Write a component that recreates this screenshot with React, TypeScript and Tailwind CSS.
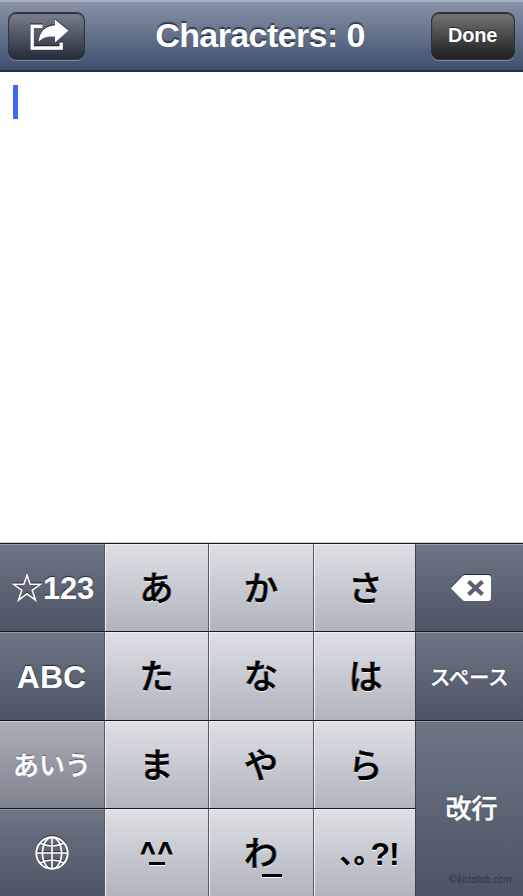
import type { ReactNode } from 'react';

const light =
  "bg-linear-to-b from-[#dfe0e6] to-[#b1b4be] text-black border-[#56575f] shadow-[inset_1px_1px_0_#f0f0f5] [text-shadow:0_1px_1px_#fff]";
const dark =
  "bg-linear-to-b from-[#6e7686] to-[#4d5464] text-white border-[#3b4150] shadow-[inset_0_1px_0_#969eae] [text-shadow:0_-1px_1px_#222936]";

function Key({ tone, className = '', children }: { tone: string; className?: string; children: ReactNode }) {
  return (
    <button className={`flex items-center justify-center border-l border-t border-t-[#14151d] whitespace-nowrap leading-none ${tone} ${className}`}>
      {children}
    </button>
  );
}

function Kana({ children }: { children: string }) {
  return <span className="pt-[2px] text-[34px] font-medium [-webkit-text-stroke:0.9px_black] [paint-order:stroke_fill]">{children}</span>;
}

function ShareIcon() {
  return (
    <svg width="40" height="32" viewBox="0 0 40 32" className="drop-shadow-[0_-1px_0_#181d27]" fill="none">
      <path d="M13.5 7.3H3.2V29H32.2V23.5" stroke="white" strokeWidth="3.4" />
      <path d="M26 .5 39.5 11.6 26 23.4V17.5C18 17 13.5 18.5 9.8 22.8C10 13 16 6.8 26 6.2Z" fill="white" />
    </svg>
  );
}

function DeleteIcon() {
  return (
    <svg width="42" height="28" viewBox="0 0 42 28" className="drop-shadow-[0_-1px_0_#202431]">
      <path d="M.8 14.2 12.5 2Q13.5 1 15 1H38Q41 1 41 4V24Q41 27 38 27H15Q13.5 27 12.5 26Z" fill="white" />
      <path d="m18.5 7.5 14 13M32.5 7.5l-14 13" stroke="#5a6171" strokeWidth="4.2" />
    </svg>
  );
}

function GlobeIcon() {
  return (
    <svg width="36" height="36" viewBox="0 0 36 36" fill="none" stroke="white" strokeWidth="1.7" className="drop-shadow-[0_-1px_0_#252b38]">
      <circle cx="18" cy="18" r="15.7" strokeWidth="2" />
      <ellipse cx="18" cy="18" rx="9.6" ry="15.7" />
      <path d="M18 2V34M2 18H34M6 8Q18 14 30 8M6 28Q18 22 30 28" />
    </svg>
  );
}

function StarIcon() {
  return (
    <svg width="30" height="29" viewBox="0 0 30 29" fill="none" stroke="white" strokeWidth="1.6" className="drop-shadow-[0_-1px_0_#252b38]">
      <path d="M15 2 18.2 11.3H28.3L20.2 17 23.5 27 15 20.8 6.5 27 9.8 17 1.7 11.3H11.8Z" />
    </svg>
  );
}

export default function App() {
  return (
    <div className="flex h-[896px] w-[523px] flex-col overflow-hidden bg-white font-['Liberation_Sans','Noto_Sans_CJK_JP',sans-serif]">
      <header className="flex h-[72px] shrink-0 items-center justify-between border-b-2 border-t-2 border-b-[#252e49] border-t-[#a6b5c5] bg-linear-to-b from-[#8a93a5] to-[#3e4f6e] pl-2 pr-2">
        <button className="flex h-[48px] w-[77px] items-center justify-center rounded-[8px] border border-[#313744] bg-linear-to-b from-[#7b828e] to-[#252d3b] pb-[3px] pl-[5px] shadow-[0_1px_0_#7d899d,inset_0_1px_1px_#282c36]">
          <ShareIcon />
        </button>
        <h1 className="pb-[2px] pl-1 text-[34px] font-bold leading-none tracking-[-0.6px] text-white [text-shadow:0_-2px_1px_#303a4c]">Characters: 0</h1>
        <button className="flex h-[48px] w-[84px] items-center justify-center rounded-[8px] border border-[#30323a] bg-linear-to-b from-[#777779] to-[#1f1f22] pb-[2px] pr-px text-[20px] font-bold tracking-[-0.2px] text-white shadow-[0_1px_0_#7d899d,inset_0_1px_1px_#292a2e] [text-shadow:0_-1px_1px_#222]">
          Done
        </button>
      </header>

      <main className="flex-1 pl-[13px] pt-[13px]">
        <div className="h-[34px] w-[5px] bg-[#4169f4]" />
      </main>

      <section className="grid h-[354px] shrink-0 grid-cols-[104px_104px_105px_102px_108px] grid-rows-[88px_89px_88px_88px] border-t border-[#cdced3]">
        <Key tone={dark} className="border-l-0 pl-[2px] text-[31px] font-bold">
          <StarIcon /><span className="ml-px pt-[2px] tracking-[-0.2px]">123</span>
        </Key>
        <Key tone={light}><Kana>あ</Kana></Key>
        <Key tone={light}><Kana>か</Kana></Key>
        <Key tone={light} className="pl-[2px]"><Kana>さ</Kana></Key>
        <Key tone={dark} className="pl-[3px]"><DeleteIcon /></Key>

        <Key tone={dark} className="border-l-0 pr-px pt-[2px] text-[32px] font-bold">ABC</Key>
        <Key tone={light}><Kana>た</Kana></Key>
        <Key tone={light}><Kana>な</Kana></Key>
        <Key tone={light} className="pl-[2px]"><Kana>は</Kana></Key>
        <Key tone={dark} className="pt-[3px] text-[20px] font-medium tracking-[0.2px] [-webkit-text-stroke:0.5px_white]">スペース</Key>

        <Key tone="bg-linear-to-b from-[#abaeb7] to-[#80848f] text-white border-[#56575f] shadow-[inset_0_1px_0_#c8cbd2] [text-shadow:0_-1px_1px_#414550]" className="border-l-0 pt-[3px] text-[26px] font-medium [-webkit-text-stroke:0.5px_white]">あいう</Key>
        <Key tone={light}><Kana>ま</Kana></Key>
        <Key tone={light}><Kana>や</Kana></Key>
        <Key tone={light} className="pl-[2px]"><Kana>ら</Kana></Key>
        <Key tone={dark} className="relative row-span-2 pl-1 text-[26px] font-medium [-webkit-text-stroke:0.5px_white]">
          <span>改行</span>
          <small className="absolute bottom-[12px] right-[11px] font-['Open_Sans'] text-[10px] font-normal italic text-[#2e3442] [-webkit-text-stroke:0px] [text-shadow:none]">©kotalab.com</small>
        </Key>

        <Key tone={dark} className="border-l-0"><GlobeIcon /></Key>
        <Key tone={light} className="flex-col">
          <span className="h-[22px] pl-[3px] text-[25px] font-bold tracking-[3px] [-webkit-text-stroke:0.9px_black]">^^</span>
          <span className="h-[3px] w-4 bg-black shadow-[0_1px_0_white]" />
        </Key>
        <Key tone={light}>
          <span className="relative flex"><Kana>わ</Kana><span className="absolute -bottom-[6px] left-[18px] h-[3px] w-5 bg-black shadow-[0_1px_0_white]" /></span>
        </Key>
        <Key tone={light} className="pl-[10px]">
          <span className="pt-[4px] text-[27px] font-medium [-webkit-text-stroke:0.9px_black]">､｡</span>
          <span className="ml-[3px] pt-[3px] text-[32px] font-bold tracking-[-1px]">?!</span>
        </Key>
      </section>
    </div>
  );
}
